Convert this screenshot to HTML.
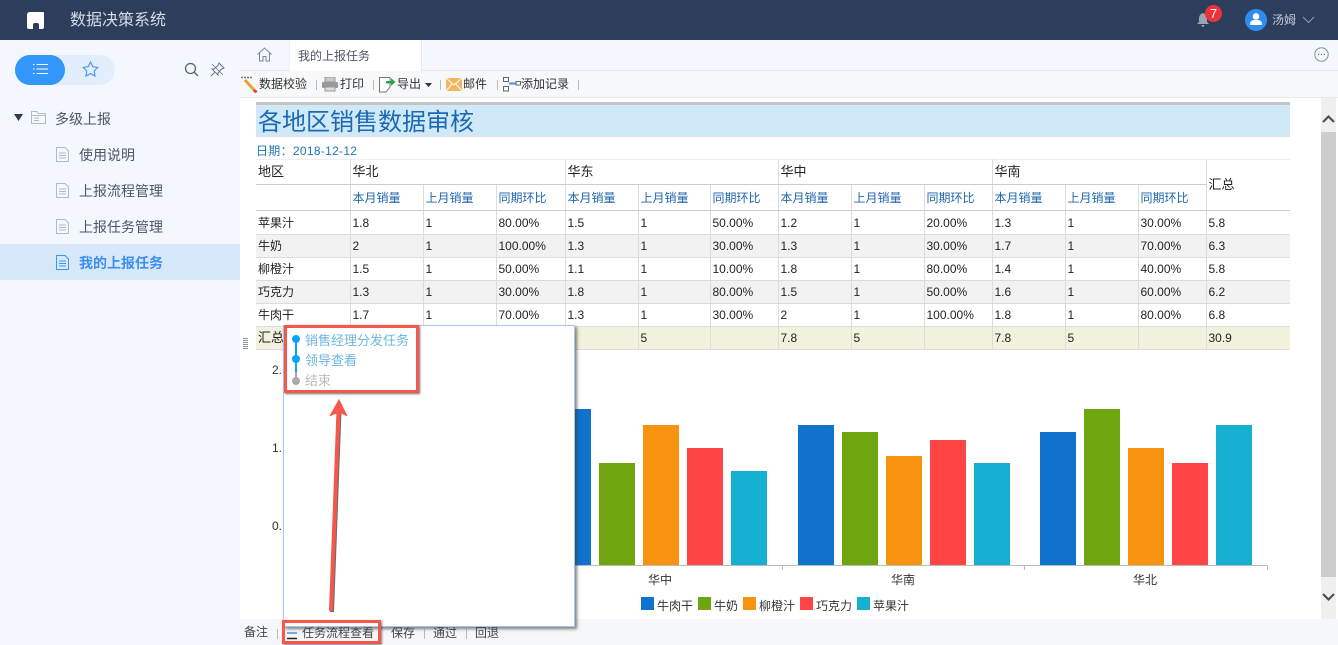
<!DOCTYPE html>
<html lang="zh-CN"><head><meta charset="utf-8"><title>数据决策系统</title>
<style>
*{box-sizing:border-box}
html,body{margin:0;padding:0;width:1338px;height:645px;overflow:hidden;background:#fff;font-family:"Liberation Sans","Noto Sans CJK SC",sans-serif;color:#333}
#wrap{position:absolute;left:0;top:0;width:1338px;height:645px;overflow:hidden;background:#fff;filter:blur(.3px)}
.a{position:absolute;white-space:nowrap}
#top{left:0;top:0;width:1338px;height:40px;background:#2c3e5c}
#side{left:0;top:40px;width:240px;height:605px;background:#f4f7fe}
.nav{font-size:14px;color:#4d5666;line-height:20px}
table{position:absolute;left:256px;top:159px;width:1034px;border-collapse:collapse;table-layout:fixed;font-size:12px;color:#222}
td{border:1px solid #dcdcdc;padding:0 0 0 2px;white-space:nowrap;overflow:hidden;height:23px;line-height:20px}
table tr>td:first-child{border-left:0}
table tr>td:last-child{border-right:0}
table tr:first-child td{border-top:1px solid #eee}
.h{color:#1f66ad}
.g td{background:#f2f2f2}
.y td{background:#f3f2de}
.bar{position:absolute}
.tb{font-size:12px;color:#333;top:76px;line-height:16px}
.sep{position:absolute;width:1px;height:10px;background:#bbb}
</style></head><body><div id="wrap">
<div class="a" id="top"></div>
<svg class="a" style="left:27px;top:12px" width="17" height="17" viewBox="0 0 17 17"><path d="M3 0H16Q17 0 17 1V15Q17 17 15 17H12V13Q12 11 10 11H8Q6 11 6 13V17H2Q0 17 0 15V3Q0 0 3 0Z" fill="#fff"/></svg>
<div class="a" style="left:70px;top:10px;font-size:16px;line-height:22px;color:#d5dbe5">数据决策系统</div>
<svg class="a" style="left:1196px;top:12px" width="14" height="15" viewBox="0 0 14 15"><path d="M7 1Q11 2 11 7V10L13 12H1L3 10V7Q3 2 7 1ZM5.500 13H8.500Q8 15 7 15Q6 15 5.500 13Z" fill="#9aa3b0"/></svg>
<div class="a" style="left:1205px;top:5px;width:17px;height:17px;border-radius:50%;background:#ee3338;color:#fff;font-size:13px;line-height:17px;text-align:center">7</div>
<div class="a" style="left:1245px;top:9px;width:22px;height:22px;border-radius:50%;background:#2e8ef0"></div>
<svg class="a" style="left:1250px;top:13px" width="12" height="13" viewBox="0 0 12 13"><circle cx="6" cy="3.500" r="3.300" fill="#fff"/><path d="M0 12Q0 7.500 3.500 7H8.500Q12 7.500 12 12Z" fill="#fff"/></svg>
<div class="a" style="left:1272px;top:12px;font-size:12px;line-height:17px;color:#c3cad6">汤姆</div>
<svg class="a" style="left:1302px;top:16px" width="13" height="8" viewBox="0 0 13 8"><path d="M1 1L6.500 6.500L12 1" fill="none" stroke="#8e99aa" stroke-width="1"/></svg>

<div class="a" id="side"></div>
<div class="a" style="left:15px;top:55px;width:100px;height:30px;border-radius:15px;background:#e3eefc"></div>
<div class="a" style="left:15px;top:55px;width:50px;height:30px;border-radius:15px;background:#3296fa"></div>
<svg class="a" style="left:33px;top:63px" width="15" height="12" viewBox="0 0 15 12"><path d="M0 1.500H1.500M3.500 1.500H15M0 6H1.500M3.500 6H15M0 10.500H1.500M3.500 10.500H15" stroke="#fff" stroke-width="1"/></svg>
<svg class="a" style="left:82px;top:61px" width="17" height="16" viewBox="0 0 17 16"><path d="M8.500 1L10.800 5.700L15.800 6.400L12.200 10L13 15L8.500 12.600L4 15L4.800 10L1.200 6.400L6.200 5.700Z" fill="none" stroke="#4a9bf5" stroke-width="1.200"/></svg>
<svg class="a" style="left:184px;top:62px" width="15" height="15" viewBox="0 0 15 15"><circle cx="6.500" cy="6.500" r="5" fill="none" stroke="#5b6470" stroke-width="1.300"/><path d="M10 10L14 14" stroke="#5b6470" stroke-width="1.300"/></svg>
<svg class="a" style="left:210px;top:62px" width="15" height="15" viewBox="0 0 15 15"><path d="M9 1L14 6L11.500 7L8 11L8 13L2 7L4 7L8 3.500ZM4.500 10.500L1 14" fill="none" stroke="#6b7380" stroke-width="1"/><path d="M2 2L13 13" stroke="#6b7380" stroke-width=".8"/></svg>

<svg class="a" style="left:14px;top:114px" width="10" height="8" viewBox="0 0 10 8"><path d="M0 0H9L4.500 7Z" fill="#333c4a"/></svg>
<svg class="a" style="left:31px;top:111px" width="15" height="13" viewBox="0 0 15 13"><path d="M.5 12.500V.5H6L7.500 2.500H14.500V12.500ZM.5 4.500H14.500M3 7H8M3 9.500H8" fill="none" stroke="#b4bac4" stroke-width="1"/></svg>
<div class="a nav" style="left:55px;top:109px">多级上报</div>

<svg class="a" style="left:56px;top:147px" width="13" height="15" viewBox="0 0 13 15"><path d="M.5 .5H9L12.500 4V14.500H.5ZM3 6H10M3 8.500H10M3 11H10" fill="none" stroke="#b4bac4"/></svg>
<div class="a nav" style="left:79px;top:145px">使用说明</div>
<svg class="a" style="left:56px;top:183px" width="13" height="15" viewBox="0 0 13 15"><path d="M.5 .5H9L12.500 4V14.500H.5ZM3 6H10M3 8.500H10M3 11H10" fill="none" stroke="#b4bac4"/></svg>
<div class="a nav" style="left:79px;top:181px">上报流程管理</div>
<svg class="a" style="left:56px;top:219px" width="13" height="15" viewBox="0 0 13 15"><path d="M.5 .5H9L12.500 4V14.500H.5ZM3 6H10M3 8.500H10M3 11H10" fill="none" stroke="#b4bac4"/></svg>
<div class="a nav" style="left:79px;top:217px">上报任务管理</div>
<div class="a" style="left:0;top:244px;width:240px;height:36px;background:#d8e8fb"></div>
<svg class="a" style="left:56px;top:255px" width="13" height="15" viewBox="0 0 13 15"><path d="M.5 .5H9L12.500 4V14.500H.5ZM3 6H10M3 8.500H10M3 11H10" fill="none" stroke="#3f97f5"/></svg>
<div class="a nav" style="left:79px;top:253px;color:#3b8ff0;font-weight:bold">我的上报任务</div>

<div class="a" style="left:240px;top:40px;width:1098px;height:31px;background:#f4f7fd;border-bottom:1px solid #e5e8ee"></div>
<svg class="a" style="left:257px;top:47px" width="15" height="15" viewBox="0 0 15 15"><path d="M.5 7.500L7.500 1L14.500 7.500M2.500 6V14H6V9.500H9V14H12.500V6" fill="none" stroke="#7c8694" stroke-width="1"/></svg>
<div class="a" style="left:289px;top:40px;width:133px;height:31px;background:#fff;border-right:1px solid #e5e8ee;border-left:1px solid #eef0f4"></div>
<div class="a" style="left:298px;top:48px;font-size:12px;line-height:17px;color:#4d5666">我的上报任务</div>
<svg class="a" style="left:1314px;top:47px" width="15" height="15" viewBox="0 0 15 15"><circle cx="7.500" cy="7.500" r="6.700" fill="none" stroke="#8a92a0" stroke-width="1"/><path d="M4 7.500H5.200M6.900 7.500H8.100M9.800 7.500H11" stroke="#6f7785" stroke-width="1.200"/></svg>

<div class="a" style="left:240px;top:71px;width:1098px;height:27px;background:#f7f8fa;border-bottom:1px solid #e8e8e8"></div>
<svg class="a" style="left:241px;top:76px" width="17" height="17" viewBox="0 0 17 17"><path d="M4 4L14 15" stroke="#e9a23b" stroke-width="3"/><path d="M13 14L15.500 16.500" stroke="#e8473a" stroke-width="3"/><path d="M0 1.500H12" stroke="#777" stroke-width="1.500" stroke-dasharray="2 1"/></svg>
<div class="a tb" style="left:259px">数据校验</div><div class="sep" style="left:316px;top:80px"></div>
<svg class="a" style="left:322px;top:77px" width="16" height="15" viewBox="0 0 16 15"><rect x="3" y="0" width="10" height="5" fill="#c8c8c8" stroke="#999"/><rect x="0" y="5" width="16" height="6" rx="1" fill="#999"/><rect x="3" y="10" width="10" height="4" fill="#ddd" stroke="#999"/></svg>
<div class="a tb" style="left:340px">打印</div><div class="sep" style="left:373px;top:80px"></div>
<svg class="a" style="left:379px;top:76px" width="17" height="17" viewBox="0 0 17 17"><path d="M.5 1.500H11V11L7 16H.5Z" fill="#fff" stroke="#777"/><path d="M7 5H12V2L16.500 6L12 10V7.500H7Z" fill="#27a845"/></svg>
<div class="a tb" style="left:397px">导出</div>
<svg class="a" style="left:425px;top:83px" width="7" height="4" viewBox="0 0 7 4"><path d="M0 0H7L3.500 4Z" fill="#333"/></svg>
<div class="sep" style="left:440px;top:80px"></div>
<svg class="a" style="left:446px;top:78px" width="16" height="13" viewBox="0 0 16 13"><rect width="16" height="13" fill="#f2b65c"/><path d="M0 0L8 7L16 0M0 13L6 6M16 13L10 6" fill="none" stroke="#fff" stroke-width="1"/></svg>
<div class="a tb" style="left:463px">邮件</div><div class="sep" style="left:497px;top:80px"></div>
<svg class="a" style="left:503px;top:76px" width="18" height="16" viewBox="0 0 18 16"><path d="M.5 1.500H5.500V5.500H.5ZM.5 10.500H5.500V15H.5ZM13 5.500H17.500V9H13Z" fill="none" stroke="#666"/><path d="M6 7.500H12.500" stroke="#3b8ff0" stroke-width="2"/></svg>
<div class="a tb" style="left:521px">添加记录</div><div class="sep" style="left:578px;top:80px"></div>

<div class="a" style="left:256px;top:102px;width:1034px;height:3px;background:#c4c4c4"></div>
<div class="a" style="left:256px;top:105px;width:1034px;height:32px;background:#cfe9f9;border-bottom:1px solid #e3e3e3"></div>
<div class="a" style="left:258px;top:108px;font-size:24px;line-height:30px;color:#1c68b3">各地区销售数据审核</div>
<div class="a" style="left:256px;top:143px;font-size:12px;line-height:16px;color:#1f77b4;letter-spacing:.3px;font-family:'Liberation Sans','Noto Sans CJK TC',sans-serif">日期：2018-12-12</div>

<table><colgroup><col style="width:94px"><col style="width:73px"><col style="width:73px"><col style="width:69px"><col style="width:73px"><col style="width:72px"><col style="width:68px"><col style="width:73px"><col style="width:73px"><col style="width:68px"><col style="width:73px"><col style="width:73px"><col style="width:68px"><col style="width:84px"></colgroup>
<tr style="font-size:13px"><td style="height:25px;border-bottom-color:#ccc">地区</td><td colspan="3" style="border-bottom-color:#ccc;padding-left:2px">华北</td><td colspan="3" style="border-bottom-color:#ccc">华东</td><td colspan="3" style="border-bottom-color:#ccc">华中</td><td colspan="3" style="border-bottom-color:#ccc">华南</td><td rowspan="2" style="border-bottom-color:#ccc">汇总</td></tr>
<tr class="h" style="color:#1f66ad"><td style="height:26px;border-bottom-color:#ccc"></td><td style="border-bottom-color:#ccc">本月销量</td><td style="border-bottom-color:#ccc">上月销量</td><td style="border-bottom-color:#ccc">同期环比</td><td style="border-bottom-color:#ccc">本月销量</td><td style="border-bottom-color:#ccc">上月销量</td><td style="border-bottom-color:#ccc">同期环比</td><td style="border-bottom-color:#ccc">本月销量</td><td style="border-bottom-color:#ccc">上月销量</td><td style="border-bottom-color:#ccc">同期环比</td><td style="border-bottom-color:#ccc">本月销量</td><td style="border-bottom-color:#ccc">上月销量</td><td style="border-bottom-color:#ccc">同期环比</td></tr>
<tr><td style="height:24px">苹果汁</td><td>1.8</td><td>1</td><td>80.00%</td><td>1.5</td><td>1</td><td>50.00%</td><td>1.2</td><td>1</td><td>20.00%</td><td>1.3</td><td>1</td><td>30.00%</td><td>5.8</td></tr>
<tr class="g"><td>牛奶</td><td>2</td><td>1</td><td>100.00%</td><td>1.3</td><td>1</td><td>30.00%</td><td>1.3</td><td>1</td><td>30.00%</td><td>1.7</td><td>1</td><td>70.00%</td><td>6.3</td></tr>
<tr><td>柳橙汁</td><td>1.5</td><td>1</td><td>50.00%</td><td>1.1</td><td>1</td><td>10.00%</td><td>1.8</td><td>1</td><td>80.00%</td><td>1.4</td><td>1</td><td>40.00%</td><td>5.8</td></tr>
<tr class="g"><td>巧克力</td><td>1.3</td><td>1</td><td>30.00%</td><td>1.8</td><td>1</td><td>80.00%</td><td>1.5</td><td>1</td><td>50.00%</td><td>1.6</td><td>1</td><td>60.00%</td><td>6.2</td></tr>
<tr><td>牛肉干</td><td>1.7</td><td>1</td><td>70.00%</td><td>1.3</td><td>1</td><td>30.00%</td><td>2</td><td>1</td><td>100.00%</td><td>1.8</td><td>1</td><td>80.00%</td><td>6.8</td></tr>
<tr class="y"><td style="font-size:13px">汇总</td><td></td><td></td><td></td><td></td><td>5</td><td></td><td>7.8</td><td>5</td><td></td><td>7.8</td><td>5</td><td></td><td>30.9</td></tr>
</table>
<div class="a" style="left:243px;top:338px;width:5px;height:11px;background:repeating-linear-gradient(0deg,#8a94a8 0 1px,transparent 1px 2px)"></div>

<div class="a" style="left:272px;top:362px;font-size:12px;line-height:16px">2.</div>
<div class="a" style="left:272px;top:440px;font-size:12px;line-height:16px">1.</div>
<div class="a" style="left:272px;top:518px;font-size:12px;line-height:16px">0.</div>

<div class="bar" style="left:555px;top:409px;width:36px;height:156px;background:#0f72cc"></div>
<div class="bar" style="left:599px;top:463px;width:36px;height:102px;background:#6fa50f"></div>
<div class="bar" style="left:643px;top:425px;width:36px;height:140px;background:#f7930f"></div>
<div class="bar" style="left:687px;top:448px;width:36px;height:117px;background:#ff4545"></div>
<div class="bar" style="left:731px;top:471px;width:36px;height:94px;background:#15afcf"></div>
<div class="bar" style="left:798px;top:425px;width:36px;height:140px;background:#0f72cc"></div>
<div class="bar" style="left:842px;top:432px;width:36px;height:133px;background:#6fa50f"></div>
<div class="bar" style="left:886px;top:456px;width:36px;height:109px;background:#f7930f"></div>
<div class="bar" style="left:930px;top:440px;width:36px;height:125px;background:#ff4545"></div>
<div class="bar" style="left:974px;top:463px;width:36px;height:102px;background:#15afcf"></div>
<div class="bar" style="left:1040px;top:432px;width:36px;height:133px;background:#0f72cc"></div>
<div class="bar" style="left:1084px;top:409px;width:36px;height:156px;background:#6fa50f"></div>
<div class="bar" style="left:1128px;top:448px;width:36px;height:117px;background:#f7930f"></div>
<div class="bar" style="left:1172px;top:463px;width:36px;height:102px;background:#ff4545"></div>
<div class="bar" style="left:1216px;top:425px;width:36px;height:140px;background:#15afcf"></div>
<div class="bar" style="left:540px;top:565px;width:728px;height:1px;background:#bbb"></div>
<div class="bar" style="left:782px;top:565px;width:1px;height:5px;background:#bbb"></div>
<div class="bar" style="left:1024px;top:565px;width:1px;height:5px;background:#bbb"></div>
<div class="bar" style="left:1267px;top:565px;width:1px;height:5px;background:#bbb"></div>
<div class="a" style="left:648px;top:572px;font-size:12px;line-height:16px">华中</div>
<div class="a" style="left:891px;top:572px;font-size:12px;line-height:16px">华南</div>
<div class="a" style="left:1133px;top:572px;font-size:12px;line-height:16px">华北</div>
<div class="bar" style="left:641px;top:597px;width:13px;height:13px;background:#0f72cc"></div><div class="a" style="left:657px;top:598px;font-size:12px;line-height:16px">牛肉干</div>
<div class="bar" style="left:698px;top:597px;width:13px;height:13px;background:#6fa50f"></div><div class="a" style="left:714px;top:598px;font-size:12px;line-height:16px">牛奶</div>
<div class="bar" style="left:743px;top:597px;width:13px;height:13px;background:#f7930f"></div><div class="a" style="left:759px;top:598px;font-size:12px;line-height:16px">柳橙汁</div>
<div class="bar" style="left:800px;top:597px;width:13px;height:13px;background:#ff4545"></div><div class="a" style="left:816px;top:598px;font-size:12px;line-height:16px">巧克力</div>
<div class="bar" style="left:857px;top:597px;width:13px;height:13px;background:#15afcf"></div><div class="a" style="left:873px;top:598px;font-size:12px;line-height:16px">苹果汁</div>

<div class="a" style="left:1321px;top:98px;width:15px;height:521px;background:#f0f0f0"></div>
<div class="a" style="left:1321px;top:132px;width:15px;height:445px;background:#cdcdcd"></div>
<svg class="a" style="left:1322px;top:114px" width="13" height="10" viewBox="0 0 13 10"><path d="M1 8L6.500 2.500L12 8" fill="none" stroke="#505050" stroke-width="2.200"/></svg>
<svg class="a" style="left:1322px;top:592px" width="13" height="10" viewBox="0 0 13 10"><path d="M1 2L6.500 7.500L12 2" fill="none" stroke="#505050" stroke-width="2.200"/></svg>

<div class="a" style="left:240px;top:619px;width:1098px;height:26px;background:#f5f7fa"></div>
<div class="a" style="left:244px;top:624px;font-size:12px;line-height:16px;color:#444">备注</div>
<div class="sep" style="left:277px;top:629px"></div>
<div class="a" style="left:391px;top:625px;font-size:12px;line-height:16px;color:#444">保存</div>
<div class="sep" style="left:424px;top:629px"></div>
<div class="a" style="left:433px;top:625px;font-size:12px;line-height:16px;color:#444">通过</div>
<div class="sep" style="left:466px;top:629px"></div>
<div class="a" style="left:475px;top:625px;font-size:12px;line-height:16px;color:#444">回退</div>
<svg class="a" style="left:287px;top:628px" width="10" height="12" viewBox="0 0 10 12"><path d="M0 5H10" stroke="#3a96f2" stroke-width="1.500"/><path d="M0 10.500H10" stroke="#222" stroke-width="1.500"/></svg>
<div class="a" style="left:302px;top:625px;font-size:12px;line-height:16px;color:#444">任务流程查看</div>

<div class="a" style="left:283px;top:325px;width:292px;height:302px;background:#fff;border:1px solid #a6c8ef;box-shadow:2px 2px 3px rgba(60,60,60,.65)"></div>
<div class="a" style="left:295px;top:340px;width:2px;height:40px;background:#10a5f0"></div>
<div class="a" style="left:295px;top:372px;width:2px;height:8px;background:#aaa"></div>
<div class="a" style="left:292px;top:335px;width:8px;height:8px;border-radius:50%;background:#0aa5f5"></div>
<div class="a" style="left:292px;top:355px;width:8px;height:8px;border-radius:50%;background:#0aa5f5"></div>
<div class="a" style="left:292px;top:377px;width:8px;height:8px;border-radius:50%;background:#aaa"></div>
<div class="a" style="left:305px;top:332px;font-size:13px;line-height:18px;color:#6db6e2">销售经理分发任务</div>
<div class="a" style="left:305px;top:352px;font-size:13px;line-height:18px;color:#6db6e2">领导查看</div>
<div class="a" style="left:305px;top:372px;font-size:13px;line-height:18px;color:#bbb">结束</div>
<div class="a" style="left:284px;top:325px;width:135px;height:68px;border:3px solid #f4584c;box-shadow:1px 1px 2px rgba(50,50,50,.7)"></div>

<svg class="a" style="left:320px;top:396px" width="40" height="220" viewBox="0 0 40 220"><path d="M11 215L18.500 14" stroke="#6d6d6d" stroke-width="4" transform="translate(1 1)"/><path d="M11 215L18.500 14" stroke="#f4584c" stroke-width="4"/><path d="M10 20L19 4L27 20Q19 14 10 20Z" fill="#f4584c" stroke="#f4584c"/></svg>

<div class="a" style="left:282px;top:620px;width:99px;height:24px;border:3px solid #f4584c;box-shadow:1px 1px 2px rgba(50,50,50,.6)"></div>
</div></body></html>
